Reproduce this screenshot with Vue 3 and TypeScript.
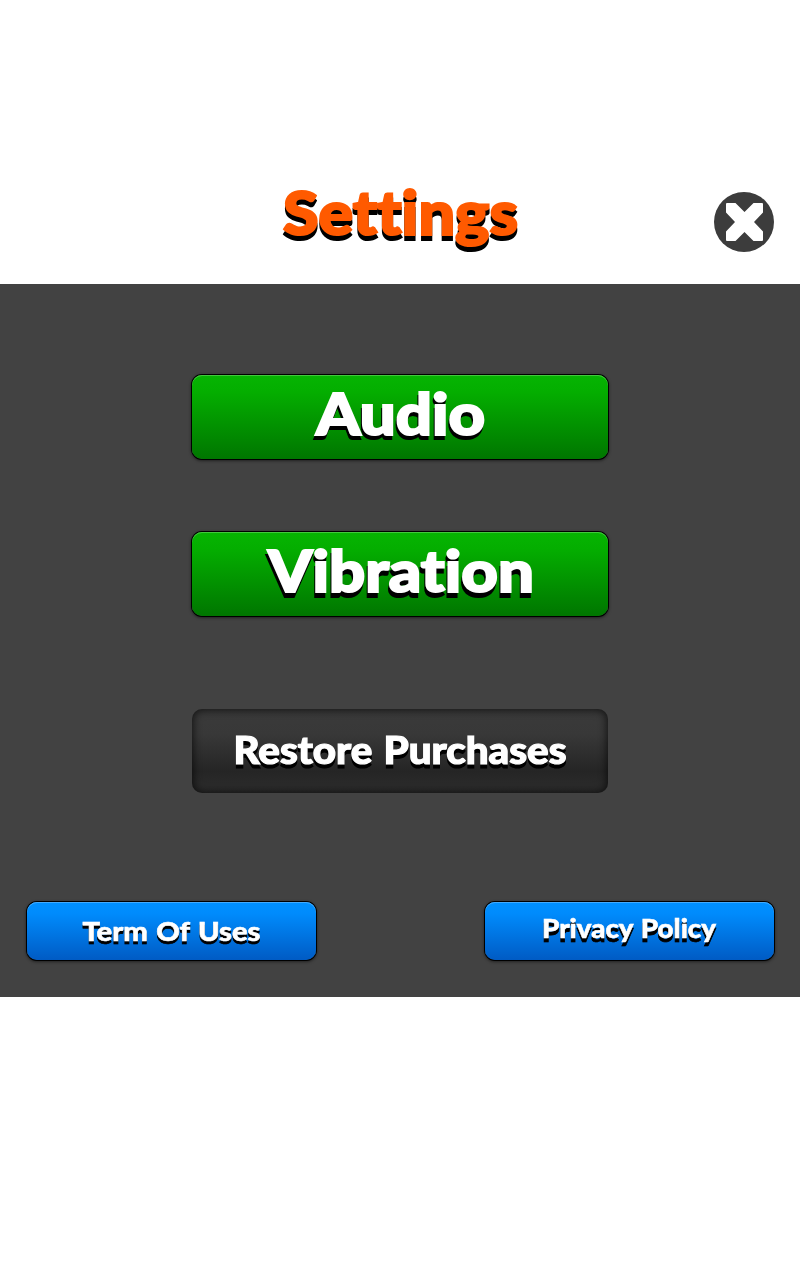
<script setup lang="ts">
interface Label {
  text: string
  kind: string
  w: number
  h: number
  x: number
  y: number
  size: number
  length: number
}

const title: Label = { text: 'Settings', kind: 'title', w: 260, h: 90, x: 13, y: 60, size: 61, length: 235 }

const toggles: Label[] = [
  { text: 'Audio', kind: 'green', w: 416, h: 84, x: 124, y: 59.5, size: 57.5, length: 169 },
  { text: 'Vibration', kind: 'green deep', w: 416, h: 84, x: 76, y: 59.5, size: 57.5, length: 266 },
]

const restore: Label = { text: 'Restore Purchases', kind: 'dark', w: 416, h: 84, x: 41.5, y: 55, size: 38.5, length: 333 }

const links: Label[] = [
  { text: 'Term Of Uses', kind: 'blue', w: 289, h: 58, x: 55.5, y: 39, size: 26.5, length: 178 },
  { text: 'Privacy Policy', kind: 'blue low', w: 289, h: 58, x: 57, y: 36.2, size: 26.5, length: 174 },
]
</script>

<template>
  <main class="screen">
    <header class="header">
      <h1 class="heading title">
        <svg class="label" :width="title.w" :height="title.h">
          <text :x="title.x" :y="title.y" :font-size="title.size" :textLength="title.length" lengthAdjust="spacingAndGlyphs">{{ title.text }}</text>
        </svg>
      </h1>
      <button class="close" aria-label="Close">
        <svg width="60" height="60" viewBox="0 0 60 60">
          <circle cx="30" cy="30" r="30" fill="#3c3c3c" />
          <path d="M13 11H21.5L30.5 20L39.5 11H48Q49 11 49 12V20.5L40 30L49 39.5V48Q49 49 48 49H39.5L30.5 40L21.5 49H13Q12 49 12 48V39.5L21 30L12 20.5V12Q12 11 13 11Z" fill="#fff" />
        </svg>
      </button>
    </header>

    <section class="panel">
      <div class="toggles">
        <button v-for="b in toggles" :key="b.text" class="btn" :class="b.kind">
          <svg class="label" :width="b.w" :height="b.h">
            <text :x="b.x" :y="b.y" :font-size="b.size" :textLength="b.length" lengthAdjust="spacingAndGlyphs">{{ b.text }}</text>
          </svg>
        </button>
      </div>
      <button class="btn dark">
        <svg class="label" :width="restore.w" :height="restore.h">
          <text :x="restore.x" :y="restore.y" :font-size="restore.size" :textLength="restore.length" lengthAdjust="spacingAndGlyphs">{{ restore.text }}</text>
        </svg>
      </button>
      <footer class="links">
        <button v-for="b in links" :key="b.text" class="btn" :class="b.kind">
          <svg class="label" :width="b.w" :height="b.h">
            <text :x="b.x" :y="b.y" :font-size="b.size" :textLength="b.length" lengthAdjust="spacingAndGlyphs">{{ b.text }}</text>
          </svg>
        </button>
      </footer>
    </section>
  </main>
</template>

<style>
body {
  margin: 0;
  background: #fff;
}
</style>

<style scoped>
.screen {
  width: 800px;
  height: 1280px;
  box-sizing: border-box;
  padding-top: 175px;
  background: #fff;
}
.header {
  display: grid;
  grid-template-columns: 270px 260px 1fr;
  height: 109px;
}
.heading {
  grid-column: 2;
  margin: 0;
}
.close {
  justify-self: end;
  width: 60px;
  height: 60px;
  margin: 17px 26px 0 0;
  padding: 0;
  border: 0;
  background: none;
}
.close svg {
  display: block;
}
.panel {
  box-sizing: border-box;
  height: 713px;
  padding-top: 91px;
  background: #424242;
  display: flex;
  flex-direction: column;
  align-items: center;
}
.toggles {
  display: flex;
  flex-direction: column;
  gap: 73px;
}
.btn {
  display: block;
  padding: 0;
  border: 0;
  border-radius: 10px;
}
.green {
  width: 416px;
  height: 84px;
  background: linear-gradient(#06b402, #04ae00 20%, #007600);
  box-shadow: 0 0 0 1px #000, 0 1px 3px 1px rgba(0, 0, 0, 0.5), inset 0 1px 0 #42c83e;
}
.dark {
  width: 416px;
  height: 84px;
  margin-top: 93px;
  background: linear-gradient(#3a3a3a, #383838 30%, #252525 75%, #2e2e2e);
  box-shadow: inset 0 0 9px 1px rgba(0, 0, 0, 0.7);
}
.links {
  width: 747px;
  margin: 109px 0 0 1px;
  display: flex;
  justify-content: space-between;
}
.blue {
  width: 289px;
  height: 58px;
  background: linear-gradient(#0090ff, #008bfc 20%, #005bc4);
  box-shadow: 0 0 0 1px #000, 0 1px 3px 1px rgba(0, 0, 0, 0.5), inset 0 1px 0 #42abff;
}
.label {
  display: block;
  overflow: visible;
  font-family: Lato, "Open Sans", sans-serif;
  font-weight: 900;
  font-variant-ligatures: none;
  word-spacing: 0.1em;
  fill: #fff;
  stroke: #fff;
  stroke-width: 0.03em;
}
.label text {
  stroke-width: 0.035em;
}
.title .label {
  fill: #ff5a00;
  stroke: #ff5a00;
  filter: drop-shadow(0 5px 0 #000);
}
.green .label {
  filter: drop-shadow(-0.5px 4px 0 #000);
}
.deep .label {
  filter: drop-shadow(-1px 5px 0 #000);
}
.dark .label {
  filter: drop-shadow(0 4px 0 #000);
}
.blue .label {
  filter: drop-shadow(0 3px 0 #000);
}
.low .label {
  filter: drop-shadow(0 4px 0 #000);
}
.title text {
  stroke-width: 2.2px;
}
.green text {
  stroke-width: 2px;
}
.dark text {
  stroke-width: 1.2px;
}
.blue text {
  stroke-width: 0.6px;
}
</style>
